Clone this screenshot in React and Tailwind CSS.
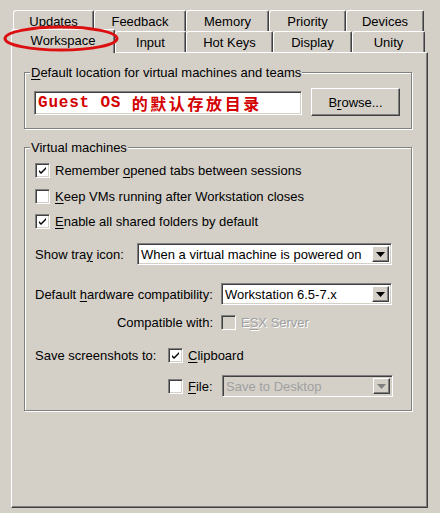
import React from "react";

const sunken =
  "border border-t-[#808080] border-l-[#808080] border-b-white border-r-white shadow-[inset_1px_1px_0_#404040,inset_-1px_-1px_0_#d4d0c8]";
const raised =
  "border border-t-white border-l-white border-b-[#404040] border-r-[#404040] shadow-[inset_-1px_-1px_0_#808080]";

function U({ children }) {
  return <span className="underline underline-offset-[2px] decoration-1">{children}</span>;
}

function Check({ checked, disabled }) {
  return (
    <div
      className={`w-[15px] h-[15px] shrink-0 flex items-center justify-center ${sunken} ${
        disabled ? "bg-[#d4d0c8]" : "bg-white"
      }`}
    >
      {checked && (
        <svg width="9" height="9" viewBox="0 0 9 9">
          <path d="M1 4 L3 6 L8 1 L8 3 L3 8 L1 6 Z" fill="#000" />
        </svg>
      )}
    </div>
  );
}

function Arrow({ disabled }) {
  return (
    <div className={`w-[17px] h-full shrink-0 bg-[#d4d0c8] flex items-center justify-center ${raised}`}>
      <svg width="9" height="5" viewBox="0 0 9 5">
        <path d="M0 0 H9 L4.5 5 Z" fill={disabled ? "#808080" : "#000"} />
      </svg>
    </div>
  );
}

function Select({ value, disabled, className }) {
  return (
    <div
      className={`flex items-stretch p-[2px] ${sunken} ${disabled ? "bg-[#d4d0c8]" : "bg-white"} ${className}`}
    >
      <div className={`flex-1 flex items-center pl-[1px] ${disabled ? "text-[#a0a0a0]" : "text-black"}`}>
        {value}
      </div>
      <Arrow disabled={disabled} />
    </div>
  );
}

function Group({ label, className, children }) {
  return (
    <div
      className={`relative border border-[#808080] shadow-[inset_1px_1px_0_#fff,1px_1px_0_#fff] ${className}`}
    >
      <span className="absolute left-[5px] top-[-8px] bg-[#d4d0c8] px-[1px] leading-[15px] whitespace-nowrap">
        {label}
      </span>
      {children}
    </div>
  );
}

const tab =
  "h-[21px] flex items-center justify-center bg-[#d4d0c8] border-t border-l border-t-white border-l-white border-r border-r-[#404040] shadow-[inset_-1px_0_0_#808080] rounded-tl-[3px] rounded-tr-[2px]";

export default function App() {
  return (
    <div
      className="relative w-[440px] h-[513px] bg-[#d4d0c8] text-[13px] leading-[15px] text-black overflow-hidden"
      style={{ fontFamily: '"Liberation Sans", "DejaVu Sans", sans-serif' }}
    >
      {/* Tab rows */}
      <div className="flex pl-[13px] pt-[10px]">
        <div className={`${tab} w-[81px]`}>Updates</div>
        <div className={`${tab} w-[92px]`}>Feedback</div>
        <div className={`${tab} w-[83px]`}>Memory</div>
        <div className={`${tab} w-[77px]`}>Priority</div>
        <div className={`${tab} w-[78px]`}>Devices</div>
      </div>
      <div className="flex items-start h-[21px] pl-[11px]">
        <div className="relative z-10 -mt-[2px] h-[24px] w-[104px] flex items-center justify-center pb-[2px] bg-[#d4d0c8] border-t border-l border-t-white border-l-white border-r border-r-[#404040] shadow-[inset_-1px_0_0_#808080] rounded-tl-[3px] rounded-tr-[2px]">
          Workspace
        </div>
        <div className={`${tab} w-[71px]`}>Input</div>
        <div className={`${tab} w-[87px]`}>Hot Keys</div>
        <div className={`${tab} w-[79px]`}>Display</div>
        <div className={`${tab} w-[73px]`}>Unity</div>
      </div>

      {/* Panel */}
      <div className="ml-[11px] w-[417px] h-[456px] border border-t-white border-l-white border-r-[#404040] border-b-[#404040] shadow-[inset_-1px_-1px_0_#808080] flex flex-col">
        <Group
          className="ml-[12px] mt-[19px] w-[388px] h-[57px] shrink-0"
          label={
            <>
              <U>D</U>efault location for virtual machines and teams
            </>
          }
        >
          <div className="flex items-start pl-[9px]">
            <div className={`mt-[18px] w-[268px] h-[24px] bg-white flex items-center pl-[3px] ${sunken}`}>
              <span
                className="text-[#d40000] font-bold text-[16px] tracking-[0.8px] whitespace-pre"
                style={{ fontFamily: '"Liberation Mono", monospace' }}
              >
                {"Guest OS "}
              </span>
              <span
                className="text-[#d40000] font-bold text-[16px] tracking-[2.6px] whitespace-nowrap"
                style={{ fontFamily: '"Noto Sans CJK SC", sans-serif' }}
              >
                的默认存放目录
              </span>
            </div>
            <div className={`ml-[9px] mt-[15px] w-[89px] h-[28px] flex items-center justify-center ${raised}`}>
              B<U>r</U>owse...
            </div>
          </div>
        </Group>

        <Group className="ml-[12px] mt-[18px] w-[388px] h-[264px] shrink-0" label="Virtual machines">
          <div className="flex flex-col pl-[10px]">
            <div className="mt-[15px] h-[15px] flex items-center gap-[5px]">
              <Check checked />
              <span>
                Remember <U>o</U>pened tabs between sessions
              </span>
            </div>
            <div className="mt-[11px] h-[15px] flex items-center gap-[5px]">
              <Check />
              <span>
                <U>K</U>eep VMs running after Workstation closes
              </span>
            </div>
            <div className="mt-[10px] h-[15px] flex items-center gap-[5px]">
              <Check checked />
              <span>
                <U>E</U>nable all shared folders by default
              </span>
            </div>
            <div className="mt-[14px] h-[22px] flex items-center">
              <span className="w-[102px] shrink-0">
                Show tra<U>y</U> icon:
              </span>
              <Select className="w-[255px] h-[22px]" value="When a virtual machine is powered on" />
            </div>
            <div className="mt-[18px] h-[22px] flex items-center">
              <span className="w-[186px] shrink-0">
                Default <U>h</U>ardware compatibility:
              </span>
              <Select className="w-[171px] h-[22px]" value="Workstation 6.5-7.x" />
            </div>
            <div className="mt-[10px] h-[15px] flex items-center">
              <span className="w-[178px] shrink-0 text-right">Compatible with:</span>
              <div className="ml-[8px]">
                <Check disabled />
              </div>
              <span className="ml-[5px] text-[#a0a0a0] [text-shadow:1px_1px_0_#fff]">
                E<U>S</U>X Server
              </span>
            </div>
            <div className="mt-[18px] h-[15px] flex items-center">
              <span className="w-[133px] shrink-0">Save screenshots to:</span>
              <Check checked />
              <span className="ml-[5px]">
                <U>C</U>lipboard
              </span>
            </div>
            <div className="mt-[12px] h-[22px] flex items-center">
              <div className="w-[133px] shrink-0" />
              <Check />
              <span className="ml-[5px] w-[34px] shrink-0">
                <U>F</U>ile:
              </span>
              <Select className="w-[171px] h-[22px]" disabled value="Save to Desktop" />
            </div>
          </div>
        </Group>
      </div>

      {/* Red annotation ellipse */}
      <svg
        className="absolute left-0 top-0 pointer-events-none z-20"
        width="130"
        height="60"
        viewBox="0 0 130 60"
      >
        <ellipse cx="61" cy="38.5" rx="56" ry="11.5" fill="none" stroke="#dc1010" strokeWidth="3" />
      </svg>
    </div>
  );
}
